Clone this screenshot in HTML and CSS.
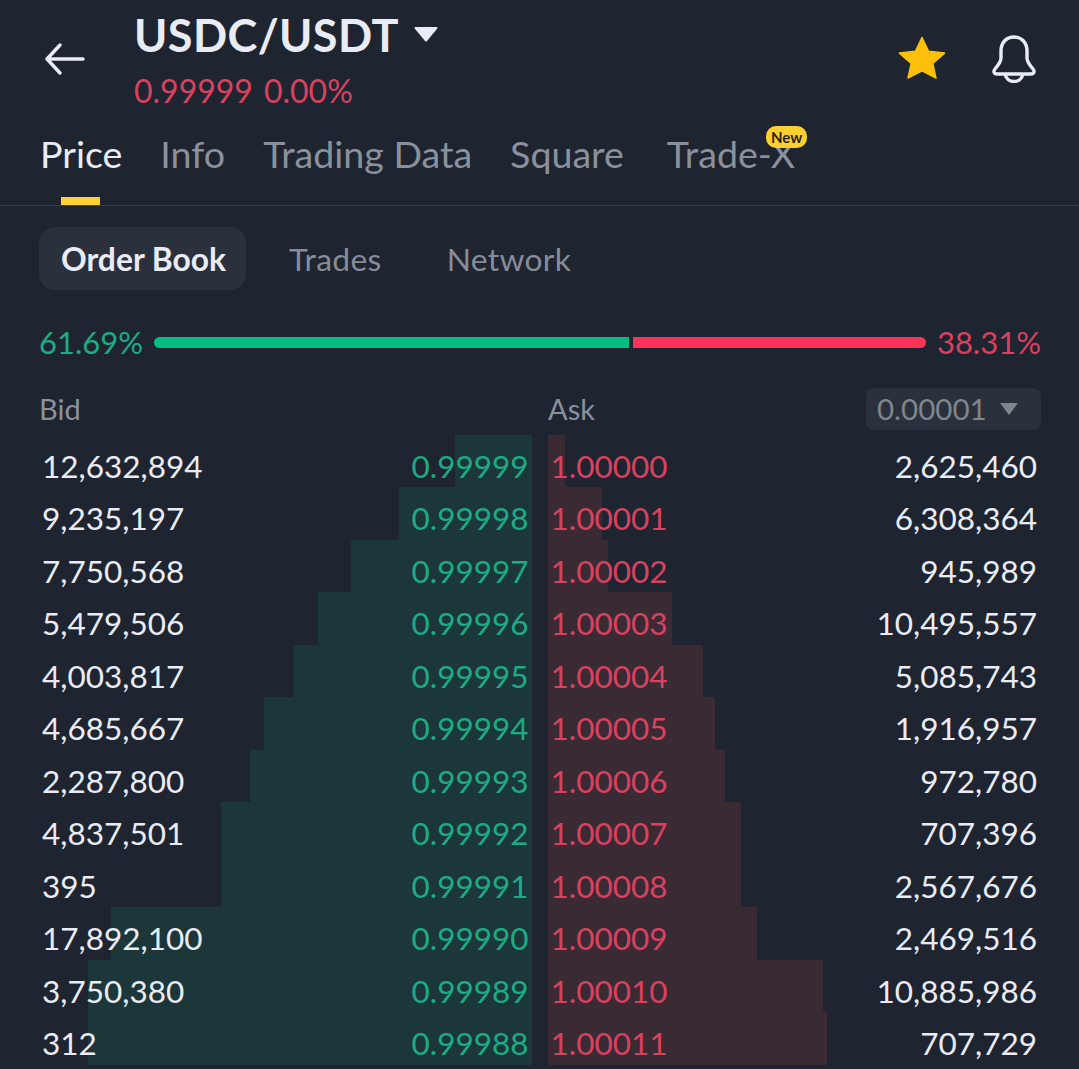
FILE: index.html
```html
<!DOCTYPE html>
<html lang="en">
<head>
  <meta charset="UTF-8" />
  <meta name="viewport" content="width=device-width, initial-scale=1.0"/>
  <title>USDC/USDT - Order Book</title>
  <link rel="stylesheet" href="styles.css">
</head>
<body>
  <div class="header">
    <svg class="back-icon" width="42" height="32" viewBox="0 0 42 32" fill="none" stroke="#eaecf5" stroke-width="3.4" stroke-linecap="round" stroke-linejoin="round">
      <path d="M39 16H3M16 2L3 16l13 14"/>
    </svg>
    <div class="pair">
      <div class="pair-name">
        <span>USDC/USDT</span>
        <svg width="24" height="16" viewBox="0 0 24 16"><path d="M1.5 1h21a1 1 0 0 1 .8 1.6L13 15a1.3 1.3 0 0 1-2 0L.7 2.600A1 1 0 0 1 1.500 1z" fill="#eaecf5"/></svg>
      </div>
      <div class="pair-price"><span>0.99999</span><span>0.00%</span></div>
    </div>
    <div class="header-icons">
      <svg width="48" height="46" viewBox="0 0 48 46"><path d="M24 2.500l6.600 13.800 16 1.800-11.800 10.300 3.200 14.800L24 35.800 10 43l3.200-14.600L1.400 18.100l16-1.800z" fill="#fcc00a" stroke="#fcc00a" stroke-width="1.500" stroke-linejoin="round"/></svg>
      <svg width="46" height="48" viewBox="0 0 46 48" fill="none" stroke="#eaecf5" stroke-width="3.400" stroke-linejoin="round">
        <path d="M23 2c-8 0-13 6-13 14v7c0 4-2 6-6 11-2 2.500-1 5 2 5h34c3 0 4-2.500 2-5-4-5-6-7-6-11v-7c0-8-5-14-13-14z"/>
        <path d="M14 39c1 5 5 7.500 9 7.500s8-2.500 9-7.500"/>
      </svg>
    </div>
  </div>

  <div class="tabs">
    <div class="tab active">Price</div>
    <div class="tab">Info</div>
    <div class="tab">Trading Data</div>
    <div class="tab">Square</div>
    <div class="tab tab-new">Trade-X<span class="new-badge">New</span></div>
  </div>

  <div class="subtabs">
    <div class="subtab active">Order Book</div>
    <div class="subtab">Trades</div>
    <div class="subtab">Network</div>
  </div>

  <div class="ratio">
    <span class="green">61.69%</span>
    <div class="ratio-bar">
      <div class="ratio-buy"></div>
      <div class="ratio-sell"></div>
    </div>
    <span class="red">38.31%</span>
  </div>

  <div class="book-head">
    <div class="book-label">Bid</div>
    <div class="book-ask-head">
      <div class="book-label">Ask</div>
      <div class="precision">0.00001 <svg width="18" height="12" viewBox="0 0 18 12"><path d="M0 0h18L9 12z" fill="#81858c"/></svg></div>
    </div>
  </div>

  <div class="book">
    <div class="row"><div class="side"><div class="depth bid" style="width:77px"></div><span>12,632,894</span><span class="green">0.99999</span></div><div class="side"><div class="depth ask" style="width:17px"></div><span class="red">1.00000</span><span>2,625,460</span></div></div>
    <div class="row"><div class="side"><div class="depth bid" style="width:133px"></div><span>9,235,197</span><span class="green">0.99998</span></div><div class="side"><div class="depth ask" style="width:54px"></div><span class="red">1.00001</span><span>6,308,364</span></div></div>
    <div class="row"><div class="side"><div class="depth bid" style="width:181px"></div><span>7,750,568</span><span class="green">0.99997</span></div><div class="side"><div class="depth ask" style="width:60px"></div><span class="red">1.00002</span><span>945,989</span></div></div>
    <div class="row"><div class="side"><div class="depth bid" style="width:214px"></div><span>5,479,506</span><span class="green">0.99996</span></div><div class="side"><div class="depth ask" style="width:124px"></div><span class="red">1.00003</span><span>10,495,557</span></div></div>
    <div class="row"><div class="side"><div class="depth bid" style="width:239px"></div><span>4,003,817</span><span class="green">0.99995</span></div><div class="side"><div class="depth ask" style="width:155px"></div><span class="red">1.00004</span><span>5,085,743</span></div></div>
    <div class="row"><div class="side"><div class="depth bid" style="width:268px"></div><span>4,685,667</span><span class="green">0.99994</span></div><div class="side"><div class="depth ask" style="width:167px"></div><span class="red">1.00005</span><span>1,916,957</span></div></div>
    <div class="row"><div class="side"><div class="depth bid" style="width:282px"></div><span>2,287,800</span><span class="green">0.99993</span></div><div class="side"><div class="depth ask" style="width:177px"></div><span class="red">1.00006</span><span>972,780</span></div></div>
    <div class="row"><div class="side"><div class="depth bid" style="width:311px"></div><span>4,837,501</span><span class="green">0.99992</span></div><div class="side"><div class="depth ask" style="width:193px"></div><span class="red">1.00007</span><span>707,396</span></div></div>
    <div class="row"><div class="side"><div class="depth bid" style="width:311px"></div><span>395</span><span class="green">0.99991</span></div><div class="side"><div class="depth ask" style="width:193px"></div><span class="red">1.00008</span><span>2,567,676</span></div></div>
    <div class="row"><div class="side"><div class="depth bid" style="width:421px"></div><span>17,892,100</span><span class="green">0.99990</span></div><div class="side"><div class="depth ask" style="width:209px"></div><span class="red">1.00009</span><span>2,469,516</span></div></div>
    <div class="row"><div class="side"><div class="depth bid" style="width:444px"></div><span>3,750,380</span><span class="green">0.99989</span></div><div class="side"><div class="depth ask" style="width:275px"></div><span class="red">1.00010</span><span>10,885,986</span></div></div>
    <div class="row"><div class="side"><div class="depth bid" style="width:444px"></div><span>312</span><span class="green">0.99988</span></div><div class="side"><div class="depth ask" style="width:279px"></div><span class="red">1.00011</span><span>707,729</span></div></div>
  </div>
</body>
</html>
```

FILE: styles.css
```css
* {
  box-sizing: border-box;
  margin: 0;
  padding: 0;
}

html, body {
  height: 1069px;
  overflow: hidden;
}

body {
  font-family: 'Lato', 'Noto Sans', sans-serif;
  background: #1e2530;
  color: #eaecf5;
}

.green {
  color: #1dab85;
}

.red {
  color: #d9415f;
}

.header {
  display: flex;
  align-items: flex-start;
  height: 116px;
  padding: 0 42px 0 44px;
}

.back-icon {
  margin-top: 43px;
}

.pair {
  flex: 1;
  margin-left: 48px;
}

.pair-name {
  display: flex;
  align-items: flex-start;
  gap: 15px;
  height: 72px;
  padding-top: 9px;
  font-size: 45px;
  line-height: 53px;
  letter-spacing: 0.4px;
  font-weight: 700;
}

.pair-name svg {
  margin-top: 17px;
}

.pair-price {
  display: flex;
  gap: 11px;
  font-size: 32px;
  line-height: 38px;
  color: #d9415f;
}

.header-icons {
  display: flex;
  gap: 45px;
  margin-top: 35px;
}

.tabs {
  display: flex;
  gap: 38px;
  height: 90px;
  padding: 15px 0 0 40px;
  border-bottom: 1px solid #373e49;
}

.tab {
  position: relative;
  height: 74px;
  font-size: 37.600px;
  line-height: 46px;
  color: #8b919c;
}

.tab.active {
  color: #eaecf5;
}

.tab.active::after {
  content: "";
  position: absolute;
  left: 21px;
  bottom: 0;
  width: 39px;
  height: 8px;
  background: #fcd02f;
}

.tab-new {
  margin-left: 5px;
}

.new-badge {
  position: absolute;
  right: -12px;
  top: -5px;
  padding: 0 5px;
  height: 22px;
  border-radius: 10px;
  background: #fcd02f;
  color: #2a2415;
  font-size: 15px;
  line-height: 22px;
  font-weight: 700;
}

.subtabs {
  display: flex;
  gap: 23px;
  margin-top: 21px;
  padding-left: 39px;
}

.subtab {
  height: 63px;
  padding: 0 21px;
  border-radius: 16px;
  font-size: 31.800px;
  line-height: 64px;
  letter-spacing: 0.3px;
  color: #878d98;
}

.subtab.active {
  padding: 0 20px 0 22px;
  background: #2a313d;
  font-weight: 700;
  letter-spacing: 0;
  color: #eaecf5;
}

.subtab.active + .subtab {
  margin-left: -1px;
}

.ratio {
  display: flex;
  align-items: center;
  gap: 11px;
  height: 40px;
  margin-top: 32px;
  padding: 0 38px 0 39px;
  font-size: 31px;
}

.ratio-bar {
  flex: 1;
  display: flex;
  gap: 4px;
  height: 11px;
}

.ratio-buy {
  width: 475px;
  background: #00bd80;
  border-radius: 6px 0 0 6px;
}

.ratio-sell {
  flex: 1;
  background: #fc3158;
  border-radius: 0 6px 6px 0;
}

.book-head {
  display: flex;
  align-items: center;
  margin-top: 25px;
  height: 43px;
  padding: 0 38px 0 39px;
  font-size: 29px;
  color: #8b919c;
}

.book-head > .book-label {
  width: 509px;
}

.book-ask-head {
  flex: 1;
  display: flex;
  justify-content: space-between;
  align-items: center;
}

.precision {
  display: flex;
  align-items: center;
  gap: 13px;
  width: 175px;
  height: 42px;
  padding-left: 11px;
  border-radius: 8px;
  background: #2a313d;
  font-size: 29.500px;
  color: #81858c;
}

.book {
  margin-top: 4.600px;
  padding: 0 38px 0 39px;
}

.row {
  display: flex;
  gap: 16px;
  height: 52.5px;
  font-size: 31.500px;
}

.side {
  position: relative;
  flex: 1;
  display: flex;
  justify-content: space-between;
  align-items: center;
  padding: 10px 3px 0;
}

.side + .side {
  padding-right: 4px;
}

.side span {
  position: relative;
}

.depth {
  position: absolute;
  top: 0;
  bottom: 0;
}

.depth.bid {
  right: 0;
  background: #1c3739;
}

.depth.ask {
  left: 0;
  background: #3a2a34;
}
```
